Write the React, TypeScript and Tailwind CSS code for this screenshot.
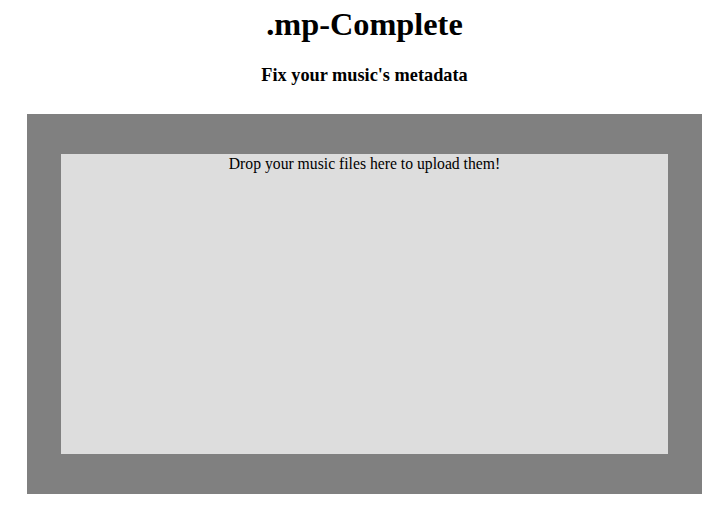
export default function App() {
  return (
    <div className="w-[726px] h-[515px] bg-white text-black" style={{ fontFamily: '"Liberation Serif", "Times New Roman", serif' }}>
      <h1 className="pt-[6px] pl-[3px] text-center text-[32.3px] font-bold leading-[36px]">.mp-Complete</h1>
      <h3 className="mt-[23px] pl-[3px] text-center text-[18.3px] font-bold leading-[21px]">Fix your music's metadata</h3>
      <div className="mt-[28px] ml-[27px] w-[675px] h-[380px] bg-[#808080] px-[34px] py-[40px]">
        <div className="w-[607px] h-[300px] bg-[#dddddd] pt-[1px] text-center text-[15.7px] leading-[18px]">
          Drop your music files here to upload them!
        </div>
      </div>
    </div>
  );
}
